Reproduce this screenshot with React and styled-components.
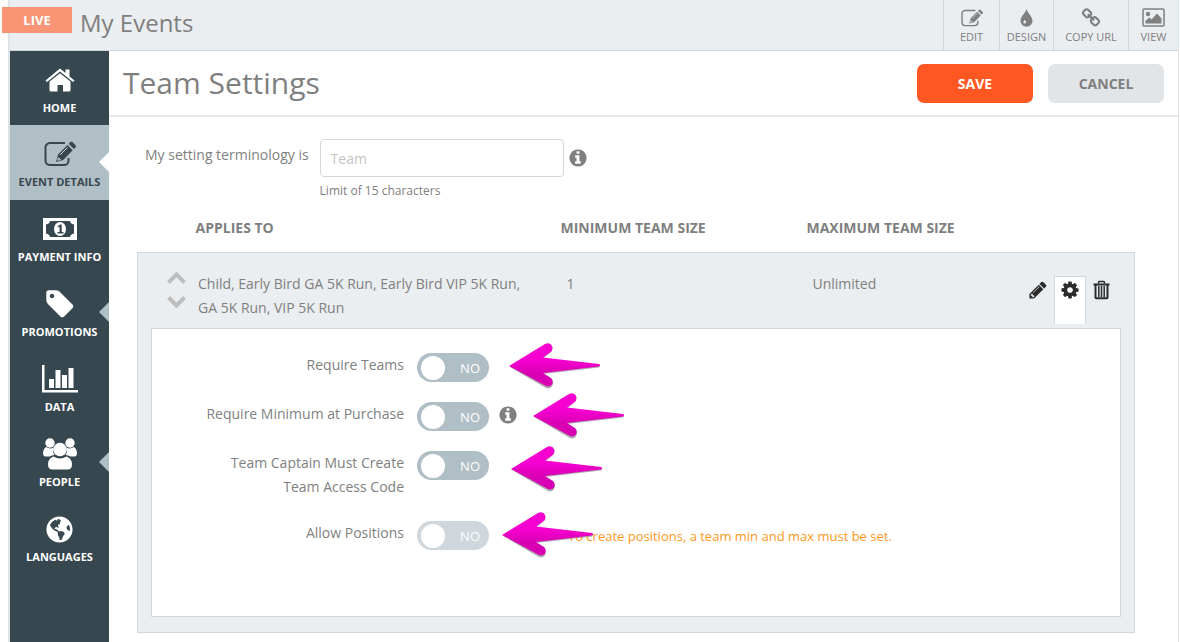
import React, { useState } from "react";
import styled, { createGlobalStyle } from "styled-components";
import { FaGlobeAmericas } from "react-icons/fa";

const GlobalStyle = createGlobalStyle`
  * {
    box-sizing: border-box;
  }

  body {
    margin: 0;
    background: #fff;
    color: #7f7f7f;
    font-family: "Open Sans", "Noto Sans", sans-serif;
    font-size: 14px;
    line-height: 24px;
  }

  button,
  input {
    font-family: inherit;
  }
`;

const Shell = styled.div`
  display: flex;
  flex-direction: column;
  min-height: 100vh;
  margin: 0 1px 0 8px;
  border: solid #dde4e8;
  border-width: 0 1px 0 2px;
`;

const Header = styled.header`
  position: relative;
  display: flex;
  justify-content: space-between;
  height: 51px;
  padding-left: 70px;
  background: #eaeef1;
  border-bottom: 1px solid #cfd8dc;
`;

const LiveBadge = styled.span`
  position: absolute;
  top: 7px;
  left: -8px;
  width: 70px;
  line-height: 26px;
  background: #f99575;
  color: #fff;
  font-size: 13px;
  font-weight: 700;
  text-align: center;
`;

const EventName = styled.h1`
  margin: 0;
  font-size: 24px;
  font-weight: 400;
  line-height: 46px;
`;

const Tools = styled.nav`
  display: flex;
`;

const Tool = styled.a`
  display: flex;
  flex-direction: column;
  align-items: center;
  width: ${(props) => props.$width}px;
  padding-top: 7px;
  border-left: 1px solid #cfd8dc;
  color: #7f7f7f;
  font-size: 11px;
  line-height: 18px;
  text-decoration: none;
`;

const ToolIcon = styled.span`
  display: flex;
  align-items: center;
  height: 21px;
`;

const Body = styled.div`
  display: flex;
  flex: 1;
`;

const Sidebar = styled.nav`
  flex: none;
  width: 99px;
  background: #37474f;
`;

const SideLink = styled.a`
  position: relative;
  display: flex;
  flex-direction: column;
  align-items: center;
  gap: 2px;
  height: 75px;
  padding-top: 11px;
  background: ${(props) => (props.$active ? "#b0bec5" : "#37474f")};
  color: ${(props) => (props.$active ? "#37474f" : "#fff")};
  font-size: 11px;
  font-weight: 700;
  line-height: 16px;
  text-decoration: none;
  white-space: nowrap;

  &:first-child {
    height: 74px;
  }
`;

const IconSlot = styled.span`
  display: flex;
  align-items: center;
  justify-content: center;
  height: 36px;
`;

const Notch = styled.span`
  position: absolute;
  top: 27px;
  right: 0;
  border: solid transparent;
  border-width: 10px 10px 10px 0;
  border-right-color: ${(props) => (props.$light ? "#fff" : "#b0bec5")};
`;

const Main = styled.main`
  flex: 1;
  min-width: 0;
`;

const TitleBar = styled.div`
  display: flex;
  align-items: center;
  justify-content: space-between;
  height: 66px;
  padding: 0 14px;
  border-bottom: 2px solid #e6ebee;
`;

const Title = styled.h2`
  margin: 0;
  font-size: 30px;
  font-weight: 400;
  line-height: 40px;
`;

const Actions = styled.div`
  display: flex;
  gap: 15px;
`;

const Button = styled.button`
  width: 116px;
  height: 39px;
  border: none;
  border-radius: 7px;
  background: ${(props) => (props.$primary ? "#ff5722" : "#e1e5e8")};
  color: ${(props) => (props.$primary ? "#fff" : "#7f7f7f")};
  font-size: 14px;
  font-weight: 700;
  cursor: pointer;
`;

const Field = styled.div`
  display: flex;
  gap: 11px;
  padding: 22px 36px 0;
`;

const FieldLabel = styled.label`
  padding-top: 4px;
`;

const FieldControl = styled.div`
  display: flex;
  flex-direction: column;
  gap: 2px;
`;

const InputLine = styled.div`
  display: flex;
  align-items: center;
  gap: 4px;
`;

const TextInput = styled.input`
  width: 244px;
  height: 38px;
  padding: 0 10px;
  border: 1px solid #cfd8dc;
  border-radius: 4px;
  color: #7f7f7f;
  font-size: 14px;

  &::placeholder {
    color: #c4c4c4;
  }
`;

const Hint = styled.span`
  font-size: 12px;
`;

const TableWrap = styled.div`
  padding: 13px 43px 9px 28px;
`;

const Table = styled.table`
  width: 100%;
  table-layout: fixed;
  border-collapse: collapse;

  th,
  td {
    padding: 0;
    text-align: left;
    vertical-align: top;
  }

  th {
    height: 36px;
    font-weight: 700;
  }

  tbody {
    background: #eaeef1;
    border: 1px solid #cfd8dc;
  }
`;

const AppliesHead = styled.th`
  && {
    padding-left: 58px;
  }
`;

const Col = styled.col`
  width: ${(props) => props.$width}px;
`;

const Cell = styled.td`
  && {
    padding: 19px 0 0 6px;
  }
`;

const Applies = styled.div`
  display: flex;
  gap: 12px;
  padding-left: 23px;
`;

const Sorter = styled.div`
  display: flex;
  flex-direction: column;
  gap: 12px;
`;

const IconButton = styled.button`
  display: flex;
  padding: 0;
  border: none;
  background: none;
  color: ${(props) => props.$color};
  cursor: pointer;
`;

const RowTools = styled.div`
  display: flex;
  gap: 6px;
  height: 56px;
  padding: 4px 0 0 2px;
`;

const ToolTab = styled.div`
  display: flex;
  align-items: flex-start;
  justify-content: center;
  width: ${(props) => (props.$open ? 32 : 19)}px;
  height: 48px;
  padding-top: 3px;
  background: ${(props) => (props.$open ? "#fff" : "none")};
  border: solid ${(props) => (props.$open ? "#cfd8dc" : "transparent")};
  border-width: ${(props) => (props.$open ? "1px 1px 0" : "1px 0 0")};
`;

const Options = styled.div`
  min-height: 289px;
  margin: 0 13px 15px;
  padding: 24px 20px;
  background: #fff;
  border: 1px solid #cfd8dc;
`;

const Option = styled.div`
  position: relative;
  display: flex;
  align-items: flex-start;
  margin-bottom: 20px;
`;

const OptionLabel = styled.label`
  width: 232px;
  margin-right: 13px;
  padding: 0 0 2px 20px;
  text-align: right;
`;

const Switch = styled.span`
  position: relative;
  display: flex;
  opacity: ${(props) => (props.$off ? 0.6 : 1)};
`;

const SwitchInput = styled.input`
  appearance: none;
  width: 72px;
  height: 29px;
  margin: 0;
  border-radius: 15px;
  background: #b0bec5;

  &::before {
    content: "";
    display: block;
    width: 24px;
    height: 24px;
    margin: 3px 4px;
    border-radius: 50%;
    background: #fff;
  }

  &:checked::before {
    margin-left: 44px;
  }
`;

const SwitchText = styled.span`
  position: absolute;
  top: 3px;
  ${(props) => (props.$on ? "left: 9px" : "right: 9px")};
  color: #fff;
  font-size: 13px;
  pointer-events: none;
`;

const OptionInfo = styled.span`
  display: flex;
  padding: 3px 0 0 9px;
`;

const Warning = styled.span`
  padding-left: 79px;
  line-height: 30px;
  color: #ff9722;
  font-size: 13px;
`;

const Pointer = styled.svg`
  position: absolute;
  top: ${(props) => props.$top}px;
  left: ${(props) => props.$left}px;
  width: 92px;
  height: 46px;
`;

const glyphs = {
  info: "M1152 1376v-160q0-14-9-23t-23-9h-96v-512q0-14-9-23t-23-9h-320q-14 0-23 9t-9 23v160q0 14 9 23t23 9h96v320h-96q-14 0-23 9t-9 23v160q0 14 9 23t23 9h448q14 0 23-9t9-23zm-128-896v-160q0-14-9-23t-23-9h-192q-14 0-23 9t-9 23v160q0 14 9 23t23 9h192q14 0 23-9t9-23zm640 416q0 209-103 385.5t-279.5 279.5-385.5 103-385.5-103-279.5-279.5-103-385.5 103-385.5 279.5-279.5 385.5-103 385.5 103 279.5 279.5 103 385.5z",
  pencil:
    "M491 1536l91-91-235-235-91 91v107h128v128h107zm523-928q0-22-22-22-10 0-17 7l-542 542q-7 7-7 17 0 22 22 22 10 0 17-7l542-542q7-7 7-17zm-54-192l416 416-832 832h-416v-416zm683 96q0 53-37 90l-166 166-416-416 166-165q36-38 90-38 53 0 91 38l235 234q37 39 37 91z",
  cog: "M1152 896q0-106-75-181t-181-75-181 75-75 181 75 181 181 75 181-75 75-181zm512-109v222q0 12-8 23t-20 13l-185 28q-19 54-39 91 35 50 107 138 10 12 10 25t-9 23q-27 37-99 108t-94 71q-12 0-26-9l-138-108q-44 23-91 38-16 136-29 186-7 28-36 28h-222q-14 0-24.5-8.5t-11.5-21.5l-28-184q-49-16-90-37l-141 107q-10 9-25 9-14 0-25-11-126-114-165-168-7-10-7-23 0-12 8-23 15-21 51-66.5t54-70.5q-27-50-41-99l-183-27q-13-2-21-12.5t-8-23.5v-222q0-12 8-23t19-13l186-28q14-46 39-92-40-57-107-138-10-12-10-24 0-10 9-23 26-36 98.5-107.5t94.5-71.5q13 0 26 10l138 107q44-23 91-38 16-136 29-186 7-28 36-28h222q14 0 24.5 8.5t11.5 21.5l28 184q49 16 90 37l142-107q9-9 24-9 13 0 25 10 129 119 165 170 7 8 7 22 0 12-8 23-15 21-51 66.5t-54 70.5q26 50 41 98l183 28q13 2 21 12.5t8 23.5z",
  link: "M1520 1216q0-40-28-68l-208-208q-28-28-68-28-42 0-72 32 3 3 19 18.5t21.5 21.5 15 19 13 25.5 3.5 27.5q0 40-28 68t-68 28q-15 0-27.5-3.5t-25.5-13-19-15-21.5-21.5-18.5-19q-33 31-33 73 0 40 28 68l206 207q27 27 68 27 40 0 68-26l147-146q28-28 28-67zm-703-705q0-40-28-68l-206-207q-28-28-68-28-39 0-68 27l-147 146q-28 28-28 67 0 40 28 68l208 208q27 27 68 27 42 0 72-31-3-3-19-18.5t-21.5-21.5-15-19-13-25.5-3.5-27.5q0-40 28-68t68-28q15 0 27.5 3.5t25.5 13 19 15 21.5 21.5 18.5 19q33-31 33-73zm895 705q0 120-85 203l-147 146q-83 83-203 83-121 0-204-85l-206-207q-83-83-83-203 0-123 88-209l-88-88q-86 88-208 88-120 0-204-84l-208-208q-84-84-84-204t85-203l147-146q83-83 203-83 121 0 204 85l206 207q83 83 83 203 0 123-88 209l88 88q86-88 208-88 120 0 204 84l208 208q84 84 84 204z",
  tag: "M576 448q0-53-37.5-90.5t-90.5-37.5-90.5 37.5-37.5 90.5 37.5 90.5 90.5 37.5 90.5-37.5 37.5-90.5zm1067 576q0 53-37 90l-491 492q-39 37-91 37-53 0-90-37l-715-716q-38-37-64.5-101t-26.5-117v-416q0-52 38-90t90-38h416q53 0 117 26.5t102 64.5l715 714q37 39 37 91z",
};

const Glyph = ({ name, size }) => (
  <svg width={size} height={size} viewBox="0 0 1792 1792" fill="currentColor">
    <path d={glyphs[name]} />
  </svg>
);

const TrashIcon = () => (
  <svg width="17" height="20" viewBox="0 0 17 20" fill="none" stroke="currentColor">
    <path d="M5.500 3.500V2.500q0-1 1-1h4q1 0 1 1v1" strokeWidth="1.500" />
    <path d="M.5 4.500h16" strokeWidth="2" />
    <path d="M2.500 5v12.500q0 .8.8.8h10.400q.8 0 .8-.8V5" strokeWidth="2" />
    <path d="M5.800 6v11M8.500 6v11M11.200 6v11" strokeWidth="1.500" />
  </svg>
);

const EditIcon = ({ width, height }) => (
  <svg width={width} height={height} viewBox="0 0 32 26" fill="none">
    <path
      d="M21 2H6a4.500 4.500 0 0 0-4.500 4.500v13A4.500 4.500 0 0 0 6 24h14a4.500 4.500 0 0 0 4.500-4.500V17"
      stroke="currentColor"
      strokeWidth="2"
    />
    <path
      d="M12 21l2-7.500L23.500 4l5.200 5.200L19.200 19zM24.700 2.800l1.700-1.700q1-1 2 0l3.200 3.200q1 1 0 2L29.900 8z"
      fill="currentColor"
    />
    <path d="M16 14l7.500-7.500M13.800 19.200l.6-2.500 1.900 1.900z" stroke="#cfd8dc" />
  </svg>
);

const DropIcon = () => (
  <svg width="13" height="18" viewBox="0 0 13 18">
    <path
      d="M6.500 0C7.300 3.600 12.500 7.700 12.500 11.800a6 6 0 0 1-12 0C.5 7.700 5.700 3.600 6.500 0z"
      fill="currentColor"
    />
    <path d="M4.800 10.500c.4 1 1.300 1.800 1.300 2.700a1.400 1.400 0 0 1-2.800 0c0-.9 1.200-1.700 1.500-2.700z" fill="#eaeef1" />
  </svg>
);

const PictureIcon = () => (
  <svg width="23" height="19" viewBox="0 0 23 19">
    <rect x="1" y="1" width="21" height="17" rx="1" fill="none" stroke="currentColor" strokeWidth="1.500" />
    <circle cx="6" cy="6" r="2.200" fill="currentColor" />
    <path d="M3.500 15.500v-2.700l4-3.300 2 2 5.500-6 4.500 5v5z" fill="currentColor" />
  </svg>
);

const HomeIcon = () => (
  <svg width="30" height="24" viewBox="0 0 30 24" fill="currentColor">
    <path d="M15 .5L20.500 5V1.500h4v7L29.500 12.500l-1.500 1.500L15 3.500 2 14 .5 12.500z" />
    <path d="M15 5.200L25.500 13.500V22q0 1.500-1.500 1.500h-6V17h-5.500v6.500H6Q4.500 23.500 4.500 22v-8.500z" />
  </svg>
);

const MoneyIcon = () => (
  <svg width="34" height="24" viewBox="0 0 34 24">
    <path d="M0 1h34v22H0z" fill="currentColor" />
    <path d="M7 4h20q.5 3 4 3.500v9q-3.500.5-4 3.500H7q-.5-3-4-3.500v-9Q6.500 7 7 4z" fill="#37474f" />
    <ellipse cx="17" cy="12" rx="6" ry="7" fill="currentColor" />
    <path d="M14.500 9.500l2.500-2h1.700V15H20.500v1.500h-6V15h2V9.500l-1.500 1z" fill="#37474f" />
  </svg>
);

const ChartIcon = () => (
  <svg width="36" height="28" viewBox="0 0 36 28" fill="currentColor">
    <path d="M0 0h2.500v25H36v2.500H0zM7 14h5v9H7zM13.500 5h5v18h-5zM20 10h5v13h-5zM26.500 3h5v20h-5z" />
  </svg>
);

const PeopleIcon = () => (
  <svg width="34" height="32" viewBox="0 0 34 32" fill="currentColor">
    <circle cx="7" cy="5" r="4.700" />
    <circle cx="27" cy="5" r="4.700" />
    <path d="M3 9q4 2.500 8 .5-2 4 .5 7.500-3 .3-5 1.500H2.500Q0 18 0 15.500 0 11 3 9zM31 9q-4 2.500-8 .5 2 4-.5 7.500 3 .3 5 1.500h4Q34 18 34 15.500 34 11 31 9z" />
    <circle cx="17" cy="11.500" r="6.800" />
    <path d="M10.500 18.500q6.500 4 13 0 5.500 2 5.500 8 0 5-4.500 5h-15Q5 31.500 5 26.500q0-6 5.500-8z" />
  </svg>
);

const Chevron = ({ down }) => (
  <svg width="19" height="12" viewBox="0 0 19 12" fill="none">
    <path
      d={down ? "M1.500 1.500l8 8 8-8" : "M1.500 10.500l8-8 8 8"}
      stroke="currentColor"
      strokeWidth="4"
    />
  </svg>
);

const Arrow = ({ top, left }) => (
  <Pointer $top={top} $left={left} viewBox="0 0 92 46" aria-hidden="true">
    <defs>
      <linearGradient id="pink" x1="0" y1="0" x2="0" y2="1">
        <stop offset="0.400" stopColor="#f500d0" />
        <stop offset="0.700" stopColor="#d800b2" />
      </linearGradient>
    </defs>
    <path
      d="M1 24L36 1.500q5-2 7 2 1.500 4-2 6.500L34 15.500l56 6q2 1.500 0 3L34 31l8 6q3 3 1 6.500-3 3.500-7 1z"
      fill="#777"
      opacity="0.600"
    />
    <path
      d="M0 23L36 1q5-2 7 2 1.500 4-2 6.500L34 14.500l56 6.500q2 1 0 2.500L34 30l8 5q3 3 1 6.500-3 3.500-7 1z"
      fill="url(#pink)"
    />
  </Pointer>
);

const Toggle = ({ id, disabled }) => {
  const [on, setOn] = useState(false);

  return (
    <Switch $off={disabled}>
      <SwitchInput
        id={id}
        type="checkbox"
        checked={on}
        disabled={disabled}
        onChange={() => setOn(!on)}
      />
      <SwitchText $on={on}>{on ? "YES" : "NO"}</SwitchText>
    </Switch>
  );
};

const tools = [
  { label: "EDIT", width: 56, icon: <EditIcon width={22} height={18} /> },
  { label: "DESIGN", width: 54, icon: <DropIcon /> },
  { label: "COPY URL", width: 75, icon: <Glyph name="link" size={20} /> },
  { label: "VIEW", width: 50, icon: <PictureIcon /> },
];

const links = [
  { label: "HOME", icon: <HomeIcon /> },
  { label: "EVENT DETAILS", icon: <EditIcon width={32} height={26} />, active: true, notch: true },
  { label: "PAYMENT INFO", icon: <MoneyIcon /> },
  { label: "PROMOTIONS", icon: <Glyph name="tag" size={32} />, notch: true },
  { label: "DATA", icon: <ChartIcon /> },
  { label: "PEOPLE", icon: <PeopleIcon />, notch: true },
  { label: "LANGUAGES", icon: <FaGlobeAmericas size={27} /> },
];

const App = () => {
  return (
    <>
      <GlobalStyle />
      <Shell>
        <Header>
          <LiveBadge>LIVE</LiveBadge>
          <EventName>My Events</EventName>
          <Tools>
            {tools.map((tool) => (
              <Tool key={tool.label} href="#" $width={tool.width}>
                <ToolIcon>{tool.icon}</ToolIcon>
                {tool.label}
              </Tool>
            ))}
          </Tools>
        </Header>
        <Body>
          <Sidebar>
            {links.map((link) => (
              <SideLink key={link.label} href="#" $active={link.active}>
                <IconSlot>{link.icon}</IconSlot>
                {link.label}
                {link.notch && <Notch $light={link.active} />}
              </SideLink>
            ))}
          </Sidebar>
          <Main>
            <TitleBar>
              <Title>Team Settings</Title>
              <Actions>
                <Button $primary>SAVE</Button>
                <Button>CANCEL</Button>
              </Actions>
            </TitleBar>
            <Field>
              <FieldLabel htmlFor="term">My setting terminology is</FieldLabel>
              <FieldControl>
                <InputLine>
                  <TextInput id="term" placeholder="Team" maxLength={15} />
                  <Glyph name="info" size={20} />
                </InputLine>
                <Hint>Limit of 15 characters</Hint>
              </FieldControl>
            </Field>
            <TableWrap>
              <Table>
                <colgroup>
                  <col />
                  <Col $width={246} />
                  <Col $width={214} />
                  <Col $width={114} />
                </colgroup>
                <thead>
                  <tr>
                    <AppliesHead>APPLIES TO</AppliesHead>
                    <th>MINIMUM TEAM SIZE</th>
                    <th>MAXIMUM TEAM SIZE</th>
                    <th aria-label="Actions" />
                  </tr>
                </thead>
                <tbody>
                  <tr>
                    <Cell>
                      <Applies>
                        <Sorter>
                          <IconButton $color="#bdbdbd" aria-label="Move up">
                            <Chevron />
                          </IconButton>
                          <IconButton $color="#bdbdbd" aria-label="Move down">
                            <Chevron down />
                          </IconButton>
                        </Sorter>
                        <span>
                          Child, Early Bird GA 5K Run, Early Bird VIP 5K Run,
                          <br />
                          GA 5K Run, VIP 5K Run
                        </span>
                      </Applies>
                    </Cell>
                    <Cell>1</Cell>
                    <Cell>Unlimited</Cell>
                    <Cell>
                      <RowTools>
                        <ToolTab>
                          <IconButton $color="#2b2b2b" aria-label="Edit">
                            <Glyph name="pencil" size={20} />
                          </IconButton>
                        </ToolTab>
                        <ToolTab $open>
                          <IconButton $color="#2b2b2b" aria-label="Settings">
                            <Glyph name="cog" size={20} />
                          </IconButton>
                        </ToolTab>
                        <ToolTab>
                          <IconButton $color="#2b2b2b" aria-label="Delete">
                            <TrashIcon />
                          </IconButton>
                        </ToolTab>
                      </RowTools>
                    </Cell>
                  </tr>
                  <tr>
                    <td colSpan={4}>
                      <Options>
                        <Option>
                          <OptionLabel htmlFor="teams">Require Teams</OptionLabel>
                          <Toggle id="teams" />
                          <Arrow top={-10} left={337} />
                        </Option>
                        <Option>
                          <OptionLabel htmlFor="minimum">Require Minimum at Purchase</OptionLabel>
                          <Toggle id="minimum" />
                          <OptionInfo>
                            <Glyph name="info" size={20} />
                          </OptionInfo>
                          <Arrow top={-9} left={361} />
                        </Option>
                        <Option>
                          <OptionLabel htmlFor="code">Team Captain Must Create Team Access Code</OptionLabel>
                          <Toggle id="code" />
                          <Arrow top={-5} left={339} />
                        </Option>
                        <Option>
                          <OptionLabel htmlFor="positions">Allow Positions</OptionLabel>
                          <Toggle id="positions" disabled />
                          <Warning>To create positions, a team min and max must be set.</Warning>
                          <Arrow top={-9} left={330} />
                        </Option>
                      </Options>
                    </td>
                  </tr>
                </tbody>
              </Table>
            </TableWrap>
          </Main>
        </Body>
      </Shell>
    </>
  );
};

export default App;
